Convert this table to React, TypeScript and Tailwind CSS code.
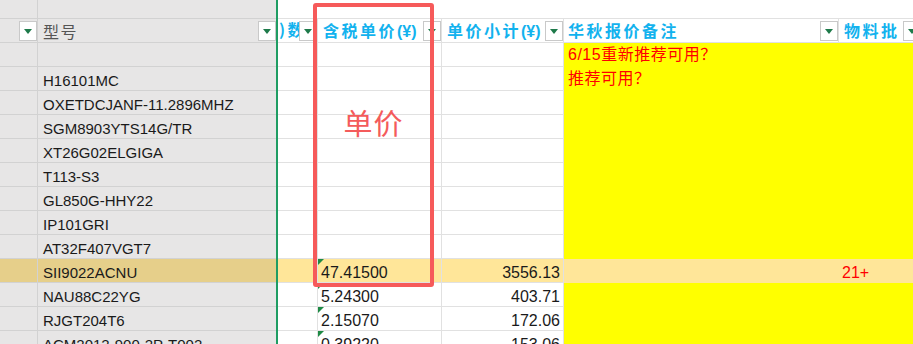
import React from 'react';

type RowData = {
  model: string;
  price?: string;
  subtotal?: string;
  note?: string;
  batch?: string;
  hot?: boolean;
};

const rows: RowData[] = [
  { model: '', note: '6/15重新推荐可用？' },
  { model: 'H16101MC', note: '推荐可用？' },
  { model: 'OXETDCJANF-11.2896MHZ' },
  { model: 'SGM8903YTS14G/TR' },
  { model: 'XT26G02ELGIGA' },
  { model: 'T113-S3' },
  { model: 'GL850G-HHY22' },
  { model: 'IP101GRI' },
  { model: 'AT32F407VGT7' },
  { model: 'SII9022ACNU', price: '47.41500', subtotal: '3556.13', batch: '21+', hot: true },
  { model: 'NAU88C22YG', price: '5.24300', subtotal: '403.71' },
  { model: 'RJGT204T6', price: '2.15070', subtotal: '172.06' },
  { model: 'ACM2012-900-2P-T002', price: '0.39220', subtotal: '153.06' },
];

function Dropdown() {
  return (
    <div className="w-[18px] h-[20px] shrink-0 bg-white border border-[#c9c9c9] flex items-center justify-center">
      <div className="w-0 h-0 border-l-[4px] border-r-[4px] border-t-[5px] border-l-transparent border-r-transparent border-t-[#1e7a4a]" />
    </div>
  );
}

function HeadLabel({ text, unit }: { text: string; unit?: boolean }) {
  return (
    <span className="whitespace-nowrap leading-none text-[#12b2ee] font-bold">
      <span className="font-['Noto_Sans_CJK_SC',sans-serif] text-[16px] tracking-[2.5px]">{text}</span>
      {unit && <span className="font-['Liberation_Sans',sans-serif] text-[16px]">(¥)</span>}
    </span>
  );
}

function DataRow({ row }: { row: RowData }) {
  const grey = row.hot ? 'bg-[#e6cf8a]' : 'bg-[#e7e6e6]';
  const white = row.hot ? 'bg-[#ffe699]' : 'bg-white';
  const yellow = row.hot ? 'bg-[#ffe699]' : 'bg-[#ffff00]';
  return (
    <div className="flex h-6 leading-none">
      <div className={`w-[38px] shrink-0 border-r border-b border-[#d2d2d2] ${grey}`} />
      <div className={`w-[238px] shrink-0 border-b border-[#d2d2d2] ${grey} pl-[5px] pt-[6px] text-[15px] text-[#1a1a1a] whitespace-nowrap`}>
        {row.model}
      </div>
      <div className="w-[2px] shrink-0 bg-[#1f9d63]" />
      <div className={`w-[40px] shrink-0 border-r border-b border-[#e1e1e1] ${white}`} />
      <div className={`w-[124px] shrink-0 border-r border-b border-[#e1e1e1] ${white} relative pl-[3px] pt-[6px] text-[16px] text-[#1a1a1a]`}>
        {row.price && (
          <div className="absolute top-0 left-0 w-0 h-0 border-t-[6px] border-r-[6px] border-t-[#1e8a45] border-r-transparent" />
        )}
        {row.price}
      </div>
      <div className={`w-[122px] shrink-0 border-r border-b border-[#e1e1e1] ${white} pr-[3px] pt-[6px] text-right text-[16px] text-[#1a1a1a]`}>
        {row.subtotal}
      </div>
      <div className={`w-[275px] shrink-0 ${yellow} pl-[4px] flex items-center text-[16px] tracking-[0.5px] text-[#ff0000] whitespace-nowrap`}>
        {row.note}
      </div>
      <div className={`flex-1 ${yellow} pl-[3px] pt-[6px] text-[16px] text-[#ff0000]`}>
        {row.batch}
      </div>
    </div>
  );
}

export default function App() {
  return (
    <div className="relative w-[913px] h-[344px] overflow-hidden bg-white font-['Liberation_Sans','Noto_Sans_CJK_SC',sans-serif]">
      {/* top empty row */}
      <div className="flex h-[19px]">
        <div className="w-[38px] shrink-0 border-r border-b border-[#d2d2d2] bg-[#e7e6e6]" />
        <div className="w-[238px] shrink-0 border-b border-[#d2d2d2] bg-[#e7e6e6]" />
        <div className="w-[2px] shrink-0 bg-[#1f9d63]" />
        <div className="flex-1 border-b border-[#e1e1e1]" />
      </div>

      {/* header row */}
      <div className="flex h-6">
        <div className="w-[38px] shrink-0 border-r border-b border-[#d2d2d2] bg-[#e7e6e6] flex items-end justify-end pb-px">
          <Dropdown />
        </div>
        <div className="w-[238px] shrink-0 border-b border-[#d2d2d2] bg-[#e7e6e6] flex items-center justify-between pl-[5px]">
          <span className="font-['Noto_Sans_CJK_SC',sans-serif] text-[16px] tracking-[1.5px] text-[#555555] leading-none">型号</span>
          <div className="self-end pb-px">
            <Dropdown />
          </div>
        </div>
        <div className="w-[2px] shrink-0 bg-[#1f9d63]" />
        <div className="w-[40px] shrink-0 border-r border-b border-[#e1e1e1] flex items-center overflow-hidden relative">
          <div className="pl-[1px]">
            <HeadLabel text=")数量" />
          </div>
          <div className="absolute right-0 bottom-px">
            <Dropdown />
          </div>
        </div>
        <div className="w-[124px] shrink-0 border-r border-b border-[#e1e1e1] flex items-center justify-between pl-[5px]">
          <HeadLabel text="含税单价" unit />
          <div className="self-end pb-px">
            <Dropdown />
          </div>
        </div>
        <div className="w-[122px] shrink-0 border-r border-b border-[#e1e1e1] flex items-center justify-between pl-[5px]">
          <HeadLabel text="单价小计" unit />
          <div className="self-end pb-px">
            <Dropdown />
          </div>
        </div>
        <div className="w-[275px] shrink-0 border-r border-b border-[#e1e1e1] flex items-center justify-between pl-[4px]">
          <HeadLabel text="华秋报价备注" />
          <div className="self-end pb-px">
            <Dropdown />
          </div>
        </div>
        <div className="flex-1 border-b border-[#e1e1e1] flex items-center pl-[5px] gap-[3px] overflow-hidden">
          <HeadLabel text="物料批" />
          <div className="self-end pb-px">
            <Dropdown />
          </div>
        </div>
      </div>

      {rows.map((row, i) => (
        <DataRow key={i} row={row} />
      ))}

      {/* red annotation box */}
      <div className="absolute left-[313px] top-[3px] w-[121px] h-[284px] border-4 border-[#f65a5a] rounded-[3px] flex justify-center pt-[101px]">
        <span className="font-['Noto_Sans_CJK_SC',sans-serif] text-[29px] leading-none tracking-[1px] text-[#f45b5b]">单价</span>
      </div>
    </div>
  );
}
